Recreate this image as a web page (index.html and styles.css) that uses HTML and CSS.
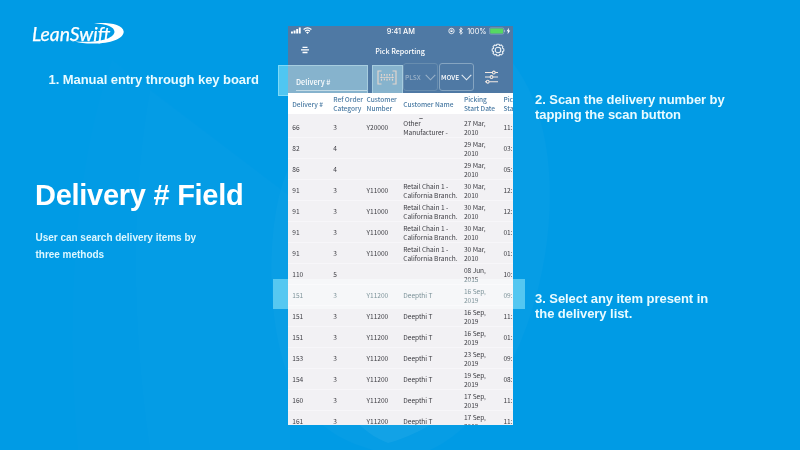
FILE: index.html
```
<!DOCTYPE html>
<html lang="en">
<head>
<meta charset="utf-8">
<title>Delivery # Field</title>
<link rel="stylesheet" href="styles.css">
</head>
<body>
<svg class="backdrop" viewBox="0 0 800 450" aria-hidden="true">
  <path d="M112 60 L290 196 V450 H78 C66 330 72 170 112 60Z" fill="#fff" opacity=".008"/>
  <path d="M150 90 L290 196 V450 H150 C132 330 130 200 150 90Z" fill="#fff" opacity=".01"/>
  <path d="M288 170 C264 220 264 345 300 400 C325 435 350 443 373 450 H430 C540 400 590 160 512 62Z" fill="#fff" opacity=".025"/>
  <path d="M355 420 H448 L430 425 C415 434 400 440 388 443 C375 438 365 431 355 420Z" fill="#fff" opacity=".05"/>
</svg>
<main class="slide">
  <section class="intro">
    <svg class="logo" viewBox="0 0 96 24">
      <text class="logo-text" x="0" y="18.6" textLength="78.500" lengthAdjust="spacingAndGlyphs">LeanSwift</text>
      <path d="M62 1.200 C78 .2 91 2.500 91.700 9.500 C92 17 77 22 60 21.600 C53 21.500 48 20.800 43 19.400 C61 20.800 81 18.500 82.500 10 C82.500 4.800 75 2 62 1.200Z" fill="#fff"/>
    </svg>
    <p class="callout manual">1. Manual entry through key board</p>
    <h1 class="title">Delivery # Field</h1>
    <p class="subtitle">User can search delivery items by<br>three methods</p>
  </section>

  <section class="phone">
    <header class="app">
      <div class="status">
        <svg class="signal" viewBox="0 0 23 8" fill="#fff">
          <rect x="0" y="4.500" width="1.900" height="2"/><rect x="2.600" y="3.500" width="1.900" height="3"/><rect x="5.200" y="2" width="1.900" height="4.500"/><rect x="7.800" y=".5" width="1.900" height="6"/>
          <path d="M12.600 2.500 Q16.500 -.6 20.400 2.500 M14 4.200 Q16.500 2.200 19 4.200" fill="none" stroke="#fff" stroke-width="1.200"/><path d="M15 5.300 Q16.500 4.100 18 5.300 L16.500 7Z"/>
        </svg>
        <span class="time">9:41 AM</span>
        <span class="power">
          <svg class="lock" viewBox="0 0 16 8" fill="none" stroke="#fff" stroke-width=".8">
            <circle cx="3.500" cy="4" r="2.700"/><rect x="2.500" y="3.500" width="2" height="1.500" fill="#fff" stroke="none"/><path d="M2.800 3.500 V2.800 Q3.500 1.800 4.200 2.800 V3.500" stroke-width=".5"/><path d="M11 2.300 L14.500 5.700 L12.800 7.300 V.7 L14.500 2.300 L11 5.700"/>
          </svg>
          <span class="percent">100%</span>
          <svg class="battery" viewBox="0 0 22 8">
            <rect x=".4" y=".9" width="14.500" height="6.200" rx="1.300" fill="none" stroke="#9db5cb" stroke-width=".6"/><rect x="1.200" y="1.600" width="12.900" height="4.800" rx=".6" fill="#55d962"/><path d="M15.600 3 V5" stroke="#9db5cb"/><path d="M20 .8 L17.600 4.300 H19 L18.600 7.200 L21.200 3.500 H19.700Z" fill="#fff"/>
          </svg>
        </span>
      </div>
      <div class="nav">
        <svg class="menu" viewBox="0 0 8 8" stroke="#fff" stroke-width="1.300"><path d="M1.500 1.300 H6.500 M0 3.900 H8 M1.500 6.500 H6.500"/></svg>
        <span class="nav-title">Pick Reporting</span>
        <svg class="gear" viewBox="0 0 14 14" fill="none" stroke="#eff4f8" stroke-width="1.050">
          <circle cx="7" cy="7" r="2.800"/>
          <path d="M5.900 1.200 H8.100 L8.600 2.600 L10.200 1.900 L11.900 3.600 L11.300 5.100 L12.800 5.900 V8.100 L11.300 8.700 L12 10.300 L10.300 12 L8.700 11.300 L8.100 12.800 H5.900 L5.300 11.300 L3.700 12 L2 10.300 L2.700 8.700 L1.200 8.100 V5.900 L2.700 5.200 L2 3.600 L3.700 2 L5.300 2.600Z" stroke-linejoin="round"/>
        </svg>
      </div>
      <div class="tools">
        <div class="field">Delivery #</div>
        <svg class="scan" viewBox="0 0 20 15" fill="none" stroke="#d3b5a5" stroke-width="1.200">
          <path d="M4.500 1 H1 V14 H4.500 M15.500 1 H19 V14 H15.500"/><path d="M4.500 4 V11 M7.400 4 V6.500 M7.400 8.500 V11 M10 4 V11 M12.600 4 V6.500 M12.600 8.500 V11 M15.500 4 V11" stroke-dasharray="1.800 .7"/><path d="M3 7.500 H17" stroke-width=".7"/>
        </svg>
        <div class="select muted">PLSX<svg viewBox="0 0 11 7"><path d="M.7 .9 L5.500 5.800 L10.300 .9"/></svg></div>
        <div class="select">MOVE<svg viewBox="0 0 11 7"><path d="M.7 .9 L5.500 5.800 L10.300 .9"/></svg></div>
        <svg class="sliders" viewBox="0 0 14 14" fill="#4f79a4" stroke="#f3e9e2" stroke-width="1.050">
          <path d="M0 2.500 H13 M0 7 H13 M0 11.700 H13"/><circle cx="8.800" cy="2.500" r="1.400"/><circle cx="6.500" cy="7" r="1.400"/><circle cx="2.700" cy="11.700" r="1.400"/>
        </svg>
      </div>
    </header>
    <div class="row head"><span>Delivery #</span><span>Ref Order<br>Category</span><span>Customer<br>Number</span><span>Customer Name</span><span>Picking<br>Start Date</span><span>Pic<br>Sta</span></div>
    <div class="rows">
      <div class="row first"><span>66</span><span>3</span><span>Y20000</span><span class="tall">Other<br>Manufacturer -</span><span>27 Mar,<br>2010</span><span>11:</span></div>
      <div class="row"><span>82</span><span>4</span><span></span><span></span><span>29 Mar,<br>2010</span><span>03:</span></div>
      <div class="row"><span>86</span><span>4</span><span></span><span></span><span>29 Mar,<br>2010</span><span>05:</span></div>
      <div class="row"><span>91</span><span>3</span><span>Y11000</span><span>Retail Chain 1 -<br>California Branch.</span><span>30 Mar,<br>2010</span><span>12:</span></div>
      <div class="row"><span>91</span><span>3</span><span>Y11000</span><span>Retail Chain 1 -<br>California Branch.</span><span>30 Mar,<br>2010</span><span>12:</span></div>
      <div class="row"><span>91</span><span>3</span><span>Y11000</span><span>Retail Chain 1 -<br>California Branch.</span><span>30 Mar,<br>2010</span><span>01:</span></div>
      <div class="row"><span>91</span><span>3</span><span>Y11000</span><span>Retail Chain 1 -<br>California Branch.</span><span>30 Mar,<br>2010</span><span>01:</span></div>
      <div class="row"><span>110</span><span>5</span><span></span><span></span><span>08 Jun,<br>2015</span><span>10:</span></div>
      <div class="row"><span>151</span><span>3</span><span>Y11200</span><span>Deepthi T</span><span>16 Sep,<br>2019</span><span>09:</span></div>
      <div class="row"><span>151</span><span>3</span><span>Y11200</span><span>Deepthi T</span><span>16 Sep,<br>2019</span><span>11:</span></div>
      <div class="row"><span>151</span><span>3</span><span>Y11200</span><span>Deepthi T</span><span>16 Sep,<br>2019</span><span>01:</span></div>
      <div class="row"><span>153</span><span>3</span><span>Y11200</span><span>Deepthi T</span><span>23 Sep,<br>2019</span><span>09:</span></div>
      <div class="row"><span>154</span><span>3</span><span>Y11200</span><span>Deepthi T</span><span>19 Sep,<br>2019</span><span>08:</span></div>
      <div class="row"><span>160</span><span>3</span><span>Y11200</span><span>Deepthi T</span><span>17 Sep,<br>2019</span><span>11:</span></div>
      <div class="row"><span>161</span><span>3</span><span>Y11200</span><span>Deepthi T</span><span>17 Sep,<br>2019</span><span>11:</span></div>
    </div>
  </section>

  <section class="notes">
    <p class="callout">2. Scan the delivery number by<br>tapping the scan button</p>
    <p class="callout select-note">3. Select any item present in<br>the delivery list.</p>
  </section>
</main>
<div class="spot spot-field"></div>
<div class="spot spot-scan"></div>
<div class="spot spot-row"></div>
</body>
</html>
```
FILE: styles.css
```
* { box-sizing: border-box; }
body {
  margin: 0;
  width: 800px;
  height: 450px;
  overflow: hidden;
  position: relative;
  background: #009be5;
  color: #fff;
  font-family: "Liberation Sans", Arial, sans-serif;
}
p, h1 { margin: 0; white-space: nowrap; }

.backdrop { position: absolute; inset: 0; width: 800px; height: 450px; }

.slide {
  position: relative;
  display: grid;
  grid-template-columns: 287.5px 225px 1fr;
  height: 450px;
}

.intro { padding: 21.500px 0 0 31.500px; }
.logo { display: block; width: 96px; height: 24px; }
.logo-text { font: italic 400 20px Lato, "Open Sans", sans-serif; fill: #fff; stroke: #fff; stroke-width: .25px; }
.callout { font-weight: 700; font-size: 13px; line-height: 15.300px; letter-spacing: -.06px; color: #e9fbff; }
.manual { margin: 26.500px 0 0 17px; }
.title { margin: 90px 0 0 3.500px; font-size: 29px; line-height: 36px; letter-spacing: -.27px; }
.subtitle { margin: 17px 0 0 4px; font-size: 10px; font-weight: 700; line-height: 16.300px; letter-spacing: -.02px; color: #dcf7ff; }

.phone {
  margin-top: 25.500px;
  height: 399.500px;
  overflow: hidden;
  font-family: "Noto Sans CJK SC", "Noto Sans", sans-serif;
  background: #f2f1f4;
}
.app { height: 67.500px; background: #4f79a4; }

.status {
  display: grid;
  grid-template-columns: 1fr auto 1fr;
  align-items: center;
  height: 11px;
  padding: 0 2px 0 3.500px;
  font-family: Inter, sans-serif;
  font-size: 7.300px;
  font-weight: 500;
  line-height: 11px;
}
.signal { width: 23px; height: 8px; }
.power { display: flex; justify-content: flex-end; align-items: center; }
.lock { width: 16px; height: 8px; margin-right: 3px; }
.percent { font-weight: 400; font-size: 7.300px; margin-right: 2px; }
.battery { width: 22px; height: 8px; }

.nav {
  display: grid;
  grid-template-columns: 14px 1fr 14px;
  align-items: center;
  height: 27px;
  padding: 0 8px 0 13px;
}
.menu { width: 8px; height: 8px; }
.nav-title { padding: 1.500px 5px 0 0; text-align: center; font-size: 7.100px; font-weight: 500; line-height: 10px; }
.gear { width: 14px; height: 14px; }

.tools { display: flex; align-items: center; height: 27.500px; padding-left: 8.500px; }
.field {
  width: 71px;
  height: 27.500px;
  padding-top: 13px;
  border-bottom: 1px solid #a8bfd2;
  font-size: 7.300px;
  font-weight: 500;
  line-height: 10px;
}
.scan { width: 20px; height: 15px; margin: 0 6px 0 10px; }
.select {
  display: flex;
  align-items: center;
  justify-content: space-between;
  flex: none;
  width: 34.500px;
  height: 28px;
  margin-right: 1.500px;
  padding: 0 1px;
  border: 1px solid #86a5c1;
  border-radius: 3px;
  font-size: 6.600px;
  font-weight: 500;
}
.select svg { flex: none; width: 11px; height: 7px; fill: none; stroke: #e5edf4; stroke-width: 1.100; }
.select.muted { color: #9ab1c8; border-color: #688daf; }
.select.muted svg { stroke: #9ab1c8; }
.sliders { width: 14px; height: 14px; margin-left: 10px; }

.row {
  display: grid;
  grid-template-columns: 41px 33.300px 36.700px 60.700px 39.500px 9px;
  align-items: center;
  height: 21px;
  padding: 1px 0 0 4.800px;
  border-bottom: 1px solid #f7f6f9;
  color: #3c3c42;
  font-size: 6.600px;
  letter-spacing: -.04px;
  line-height: 9px;
  white-space: nowrap;
}
.head { height: 21px; border: 0; background: #fff; color: #4d7da5; font-weight: 500; }
.rows { overflow: hidden; }
.first { height: 24px; padding-top: 4px; }
.tall { position: relative; }
/* descender of the name line scrolled under the table head */
.tall::before {
  content: "";
  position: absolute;
  left: 16px;
  top: -1px;
  width: 3.500px;
  height: 1.500px;
  border-radius: 0 0 2px 2px;
  background: #77777c;
}

.notes { padding: 91.500px 0 0 22.500px; }
.select-note { margin-top: 168.500px; }

.spot { position: absolute; mix-blend-mode: screen; background: #506e73; }
.spot-field { left: 278px; top: 65px; width: 90px; height: 30.500px; border: 1px solid #7f9fa5; }
.spot-scan { left: 372px; top: 64.500px; width: 30.500px; height: 30px; border: 1px solid #7f9fa5; }
.spot-row { left: 272.500px; top: 279px; width: 252.500px; height: 29.500px; }
```
